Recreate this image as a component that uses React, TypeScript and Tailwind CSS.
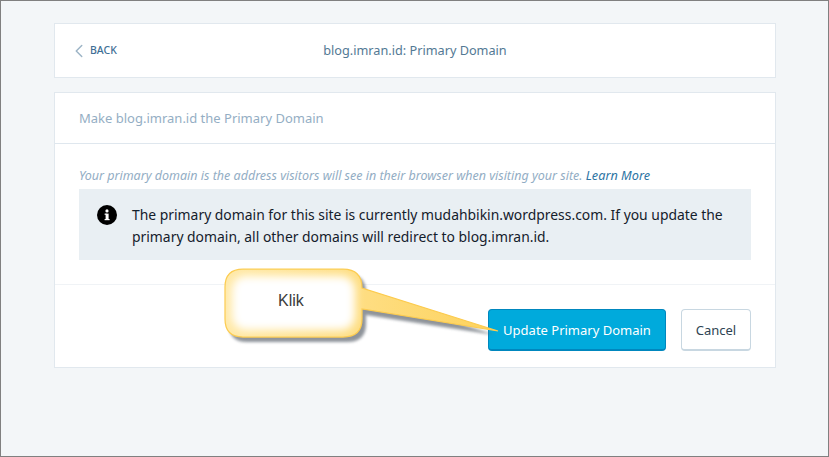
import { ChevronLeft } from 'lucide-react';

function Callout() {
  return (
    <div className="absolute left-[218px] top-[262px] w-[290px] h-[86px]">
      <svg width="290" height="86" viewBox="0 0 290 86" className="absolute inset-0">
        <defs>
          <filter id="soft" x="-20%" y="-20%" width="140%" height="140%">
            <feGaussianBlur stdDeviation="1.6" />
          </filter>
          <filter id="glow" x="-20%" y="-20%" width="140%" height="140%">
            <feGaussianBlur stdDeviation="4" />
          </filter>
          <linearGradient id="tail" x1="0" y1="0" x2="1" y2="0">
            <stop offset="0" stopColor="#ffe9a8" />
            <stop offset="1" stopColor="#fdd25c" />
          </linearGradient>
        </defs>
        {/* drop shadow */}
        <path
          d="M24 6 H124 Q143 6 143 25 L272 67 L143 47 V56 Q143 74 124 74 H24 Q6 74 6 56 V24 Q6 6 24 6 Z"
          transform="translate(4 5)"
          fill="#5f6670"
          opacity="0.7"
          filter="url(#soft)"
        />
        <path
          d="M24 6 H124 Q143 6 143 25 L279 68 L143 46 V56 Q143 74 124 74 H24 Q6 74 6 56 V24 Q6 6 24 6 Z"
          fill="url(#tail)"
          stroke="#fccb4e"
          strokeWidth="1.25"
        />
        {/* white centre of the bubble */}
        <rect x="13" y="13" width="123" height="54" rx="14" fill="#ffffff" filter="url(#glow)" />
      </svg>
      <span className="absolute left-[59px] top-[28px] text-[16px] leading-5 text-[#3c3c3c] font-['Liberation_Sans',sans-serif]">
        Klik
      </span>
    </div>
  );
}

export default function App() {
  return (
    <div className="relative w-[829px] h-[457px] overflow-hidden bg-[#f3f6f8] border border-[#808080] pt-[22px] pl-[53px] font-['Noto_Sans','Open_Sans',sans-serif]">
      <div className="w-[722px] flex flex-col gap-[14px]">
        {/* Header card */}
        <div className="h-[55px] bg-white border border-[#e1e8ee] flex items-center relative">
          <div className="flex items-center pl-[14px] gap-0 pt-px">
            <ChevronLeft size={22} strokeWidth={1.6} className="text-[#9db4c6] -ml-[1px]" />
            <span className="text-[10.5px] font-medium text-[#3f6f96]">BACK</span>
          </div>
          <span className="absolute left-0 right-0 text-center text-[12.7px] text-[#537994] pt-px">
            blog.imran.id: Primary Domain
          </span>
        </div>

        {/* Main card */}
        <div className="h-[276px] bg-white border border-[#e1e8ee] flex flex-col">
          <div className="h-[51px] flex items-center px-6 pt-px border-b border-[#dfe7ee] text-[13px] text-[#94aec4]">
            Make blog.imran.id the Primary Domain
          </div>
          <div className="px-6 pt-[21px] h-[141px] border-b border-[#f0f3f6]">
            <p className="text-[12.5px] leading-[20px] italic text-[#92adc4] whitespace-nowrap">
              Your primary domain is the address visitors will see in their browser when visiting your site.{' '}
              <span className="text-[#2d74a3] text-[12.7px]">Learn More</span>
            </p>
            <div className="mt-[3px] h-[71px] bg-[#e9eff3] flex items-start pl-[18px] pt-[15px] pr-[16px] gap-[15px]">
              <svg width="20" height="20" viewBox="0 0 20 20" className="mt-[1px] shrink-0">
                <circle cx="10" cy="10" r="10" fill="#000" />
                <rect x="8.6" y="8.6" width="3" height="6.4" fill="#fff" />
                <rect x="7.6" y="8.6" width="2" height="1.2" fill="#fff" />
                <rect x="7.6" y="14" width="5" height="1.2" fill="#fff" />
                <circle cx="10" cy="5.9" r="1.6" fill="#fff" />
              </svg>
              <p className="text-[13.9px] leading-[22px] text-[#14202b]">
                The primary domain for this site is currently mudahbikin.wordpress.com. If you update the primary domain, all other domains will redirect to blog.imran.id.
              </p>
            </div>
          </div>
          <div className="flex-1 flex justify-end items-start pt-[24px] px-6 gap-[15px]">
            <button className="w-[178px] h-[42px] pt-[2px] rounded-[4px] bg-[#00aadc] border border-[#0087be] border-b-2 text-white text-[13px]">
              Update Primary Domain
            </button>
            <button className="w-[70px] h-[42px] pt-[2px] rounded-[4px] bg-white border border-[#c8d7e1] border-b-2 text-[#2e4453] text-[13px]">
              Cancel
            </button>
          </div>
        </div>
      </div>
      <Callout />
    </div>
  );
}
